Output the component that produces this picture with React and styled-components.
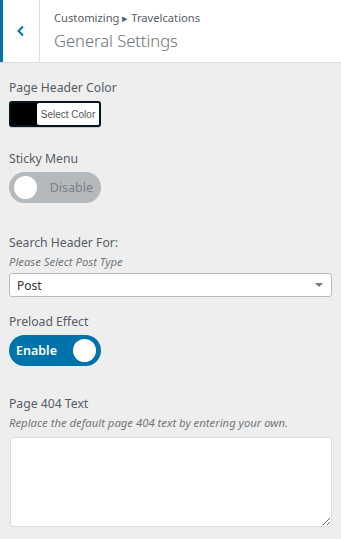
import styled, { createGlobalStyle } from "styled-components";

const GlobalStyle = createGlobalStyle`
  body {
    margin: 0;
    background: #eeeeee;
    font-family: "Noto Sans", "Open Sans", sans-serif;
    color: #555d66;
  }
`;

const Panel = styled.div`
  width: 341px;
  height: 539px;
  background: #eeeeee;
  overflow: hidden;
`;

const Header = styled.header`
  display: flex;
  height: 62px;
  background: #fff;
  border-bottom: 1px solid #dddddd;
`;

const BackButton = styled.button`
  width: 40px;
  flex: none;
  display: flex;
  align-items: center;
  justify-content: center;
  background: #fff;
  border: none;
  border-left: 3px solid #0073aa;
  border-right: 1px solid #dddddd;
  padding: 0;
  color: #0073aa;
`;

const Titles = styled.div`
  display: flex;
  flex-direction: column;
  padding: 10px 0 0 14px;
`;

const Crumb = styled.span`
  font-size: 11.2px;
  line-height: 16px;
  color: #555d66;
`;

const Title = styled.h1`
  margin: 4px 0 0;
  font-size: 16.5px;
  font-weight: 300;
  line-height: 22px;
  color: #6b7177;
`;

const Body = styled.div`
  display: flex;
  flex-direction: column;
  padding: 16px 9px 0 9px;
`;

const Control = styled.div`
  display: flex;
  flex-direction: column;
  margin-bottom: ${(p) => p.$gap || 24}px;
`;

const Label = styled.span`
  font-size: 12.2px;
  line-height: 18px;
  color: #555d66;
  margin-bottom: ${(p) => (p.$tight ? 2 : 4)}px;
`;

const Description = styled.span`
  font-size: 11.3px;
  font-style: italic;
  line-height: 16px;
  color: #72777c;
  margin-bottom: ${(p) => p.$after || 3}px;
`;

const ColorButton = styled.button`
  display: flex;
  width: 92px;
  height: 26px;
  padding: 0;
  border: 2px solid #04161f;
  border-radius: 3px;
  background: #000;
  box-shadow: 0 1px 0 #ccc;
  overflow: hidden;
`;

const Swatch = styled.span`
  width: 26px;
  height: 100%;
  background: #000;
`;

const ColorText = styled.span`
  flex: 1;
  display: flex;
  align-items: center;
  justify-content: center;
  background: #fff;
  font-family: inherit;
  font-size: 10px;
  color: #555;
  border-radius: 2px 0 0 2px;
`;

const Toggle = styled.div`
  position: relative;
  display: flex;
  align-items: center;
  width: 92px;
  height: 31px;
  border-radius: 16px;
  background: ${(p) => (p.$on ? "#0073aa" : "#b4b9be")};
  box-sizing: border-box;
  padding: ${(p) => (p.$on ? "0 0 0 7px" : "0 8px 0 0")};
  justify-content: ${(p) => (p.$on ? "flex-start" : "flex-end")};
`;

const ToggleText = styled.span`
  font-size: 12.5px;
  font-weight: ${(p) => (p.$on ? 600 : 400)};
  color: ${(p) => (p.$on ? "#fff" : "#7b8186")};
`;

const Knob = styled.span`
  position: absolute;
  top: 4px;
  ${(p) => (p.$on ? "right: 5px;" : "left: 5px;")}
  width: 23px;
  height: 23px;
  border-radius: 50%;
  background: #fff;
`;

const Select = styled.div`
  display: flex;
  align-items: center;
  justify-content: space-between;
  height: 24px;
  box-sizing: border-box;
  background: #fff;
  border: 1px solid #bbbbbb;
  border-radius: 3px;
  padding: 0 8px 0 7px;
  font-size: 12px;
  color: #333;
`;

const Caret = styled.span`
  width: 0;
  height: 0;
  border-left: 4px solid transparent;
  border-right: 4px solid transparent;
  border-top: 4px solid #777;
`;

const TextArea = styled.textarea`
  width: 322px;
  height: 90px;
  box-sizing: border-box;
  margin: 0 0 0 1px;
  border: 1px solid #ddd;
  border-radius: 3px;
  background: #fff;
  resize: vertical;
  font-family: inherit;
`;

export default function App() {
  return (
    <Panel>
      <GlobalStyle />
      <Header>
        <BackButton aria-label="Back">
          <svg width="10" height="12" viewBox="0 0 10 12">
            <path d="M7 1.5 L2.5 6 L7 10.5" fill="none" stroke="currentColor" strokeWidth="2" />
          </svg>
        </BackButton>
        <Titles>
          <Crumb>Customizing ▸ Travelcations</Crumb>
          <Title>General Settings</Title>
        </Titles>
      </Header>
      <Body>
        <Control $gap={23}>
          <Label>Page Header Color</Label>
          <ColorButton>
            <Swatch />
            <ColorText>Select Color</ColorText>
          </ColorButton>
        </Control>
        <Control $gap={31}>
          <Label>Sticky Menu</Label>
          <Toggle>
            <Knob />
            <ToggleText>Disable</ToggleText>
          </Toggle>
        </Control>
        <Control $gap={16}>
          <Label $tight>Search Header For:</Label>
          <Description>Please Select Post Type</Description>
          <Select>
            Post
            <Caret />
          </Select>
        </Control>
        <Control $gap={29}>
          <Label>Preload Effect</Label>
          <Toggle $on>
            <ToggleText $on>Enable</ToggleText>
            <Knob $on />
          </Toggle>
        </Control>
        <Control>
          <Label $tight>Page 404 Text</Label>
          <Description $after={6}>Replace the default page 404 text by entering your own.</Description>
          <TextArea />
        </Control>
      </Body>
    </Panel>
  );
}
